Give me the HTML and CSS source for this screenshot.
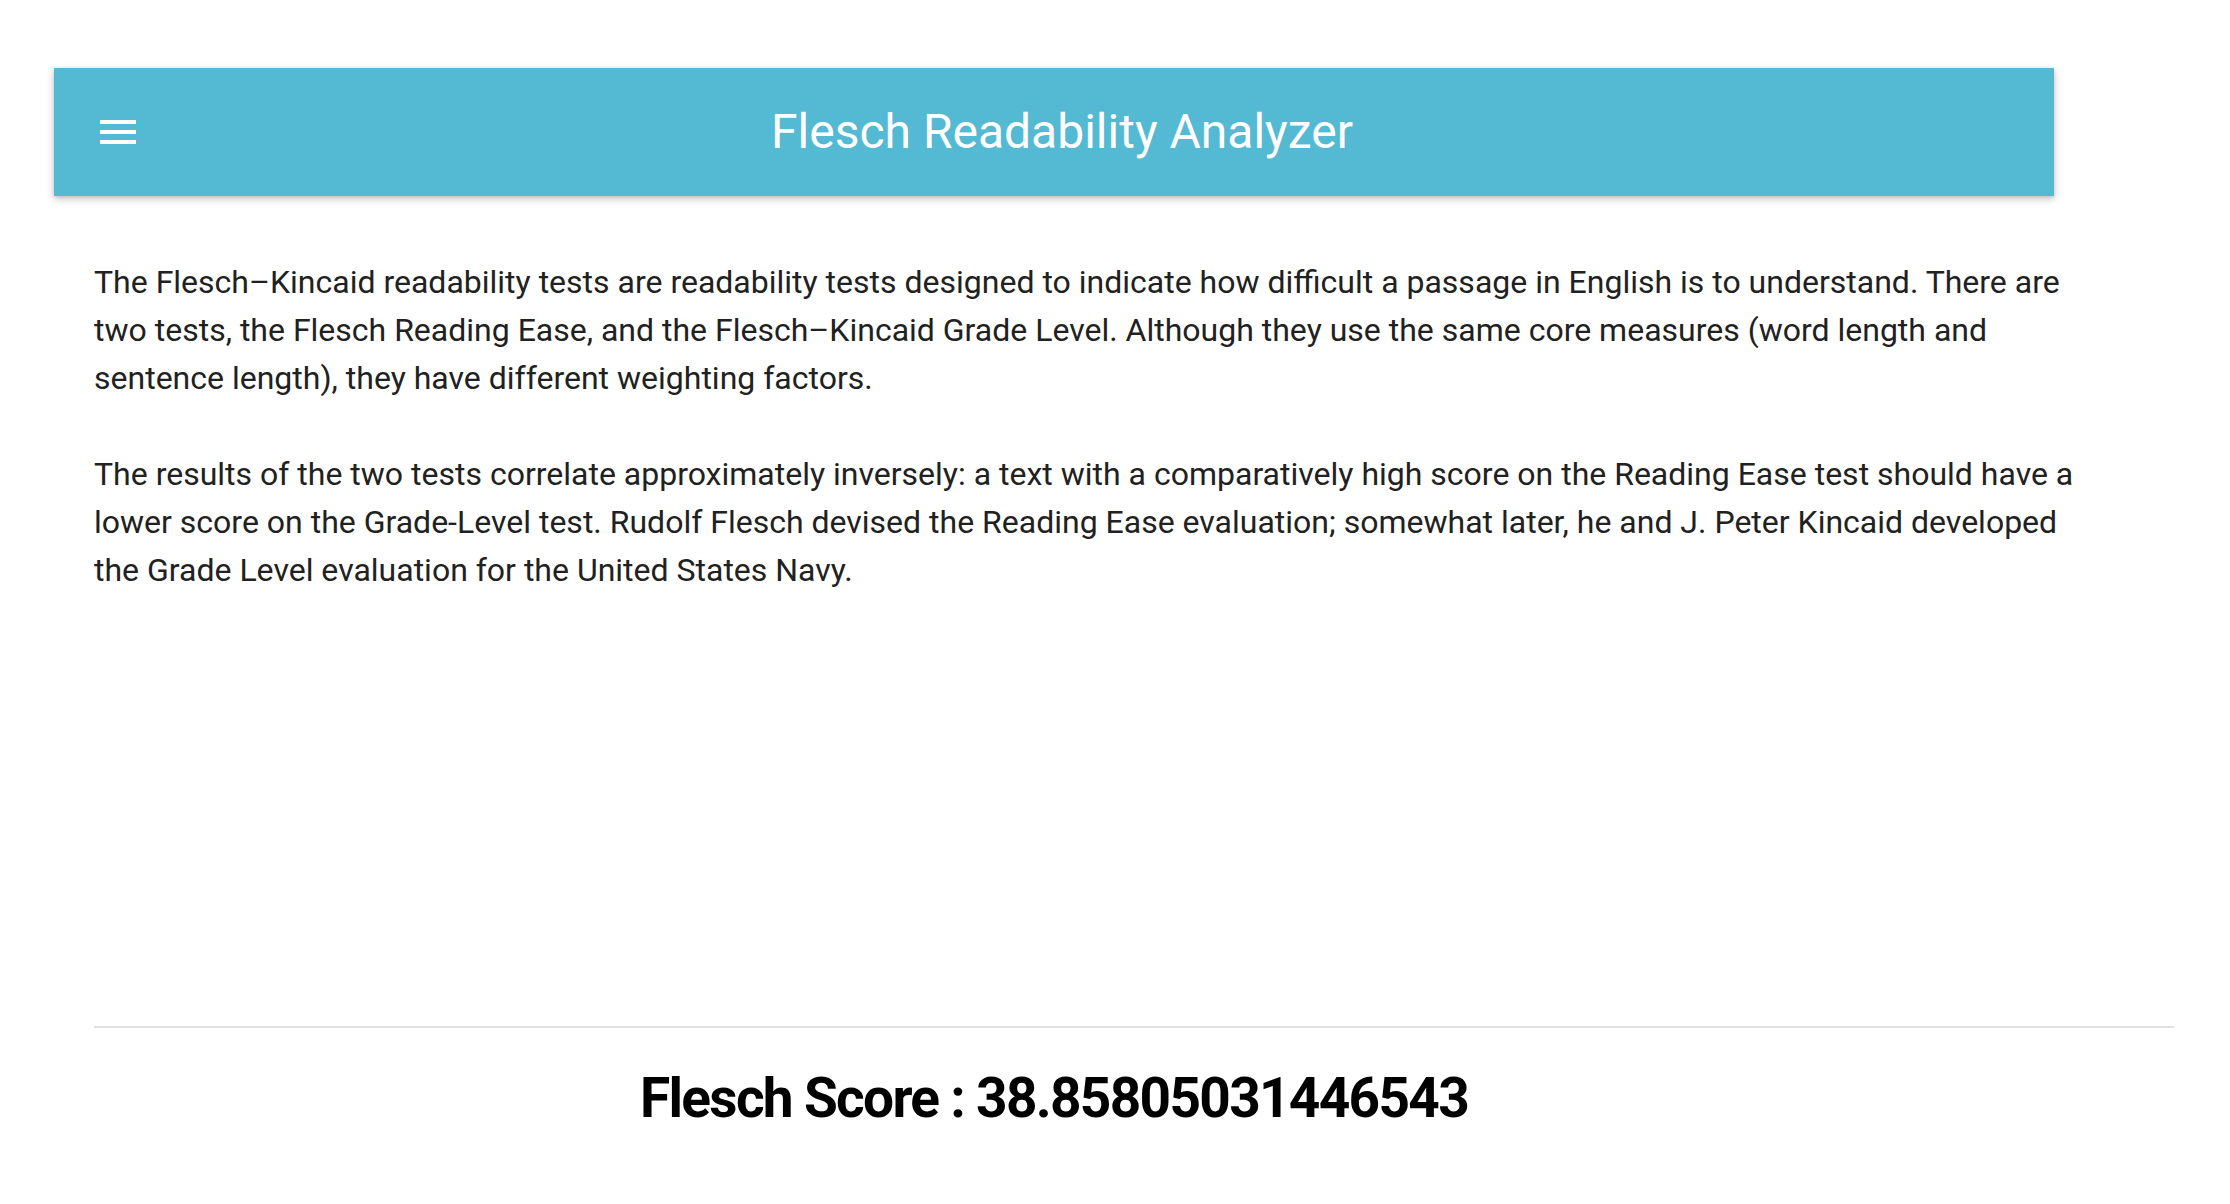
FILE: index.html
```html
<!DOCTYPE html>
<html lang="en">
<head>
<meta charset="utf-8">
<title>Flesch Readability Analyzer</title>
<link rel="stylesheet" href="styles.css">
</head>
<body>
<div class="page">
  <header class="appbar">
    <button class="menu-btn" aria-label="Menu">
      <svg width="48" height="48" viewBox="0 0 24 24"><path fill="#fff" d="M3 18h18v-2H3v2zm0-5h18v-2H3v2zm0-7v2h18V6H3z"/></svg>
    </button>
    <h1 class="title">Flesch Readability Analyzer</h1>
  </header>
  <main class="content">
    <p class="para">The Flesch–Kincaid readability tests are readability tests designed to indicate how difficult a passage in English is to understand. There are two tests, the Flesch Reading Ease, and the Flesch–Kincaid Grade Level. Although they use the same core measures (word length and sentence length), they have different weighting factors.</p>
    <p class="para">The results of the two tests correlate approximately inversely: a text with a comparatively high score on the Reading Ease test should have a lower score on the Grade-Level test. Rudolf Flesch devised the Reading Ease evaluation; somewhat later, he and J. Peter Kincaid developed the Grade Level evaluation for the United States Navy.</p>
  </main>
  <div class="divider"></div>
  <div class="score">Flesch Score : 38.85805031446543</div>
</div>
</body>
</html>
```
FILE: styles.css
```css
html, body {
  margin: 0;
  padding: 0;
  background: #fff;
}
body {
  font-family: Roboto, "Noto Sans", Arial, sans-serif;
  color: #212121;
}
.page {
  display: flex;
  flex-direction: column;
  padding-top: 68px;
}
.appbar {
  display: flex;
  align-items: center;
  margin-left: 54px;
  width: 2000px;
  height: 128px;
  box-sizing: border-box;
  padding-left: 40px;
  background: #54b9d2;
  box-shadow: 0 3px 8px rgba(0, 0, 0, 0.22), 0 1px 3px rgba(0, 0, 0, 0.12);
}
.menu-btn {
  width: 48px;
  height: 48px;
  padding: 0;
  border: 0;
  background: transparent;
  display: flex;
}
.title {
  flex: 1;
  margin: 0;
  padding-right: 72px;
  text-align: center;
  color: #fff;
  font-size: 48px;
  font-weight: 400;
  line-height: 1;
}
.content {
  margin-left: 94px;
  width: 2000px;
  padding-top: 62px;
  display: flex;
  flex-direction: column;
  gap: 48px;
}
.para {
  margin: 0;
  font-size: 32px;
  line-height: 48px;
}
.divider {
  margin-left: 94px;
  margin-top: 432px;
  width: 2080px;
  height: 2px;
  background: #e0e0e0;
}
.score {
  margin-top: 38px;
  padding-left: 640px;
  font-size: 55px;
  font-weight: 700;
  letter-spacing: -1.7px;
  color: #000;
}
```
